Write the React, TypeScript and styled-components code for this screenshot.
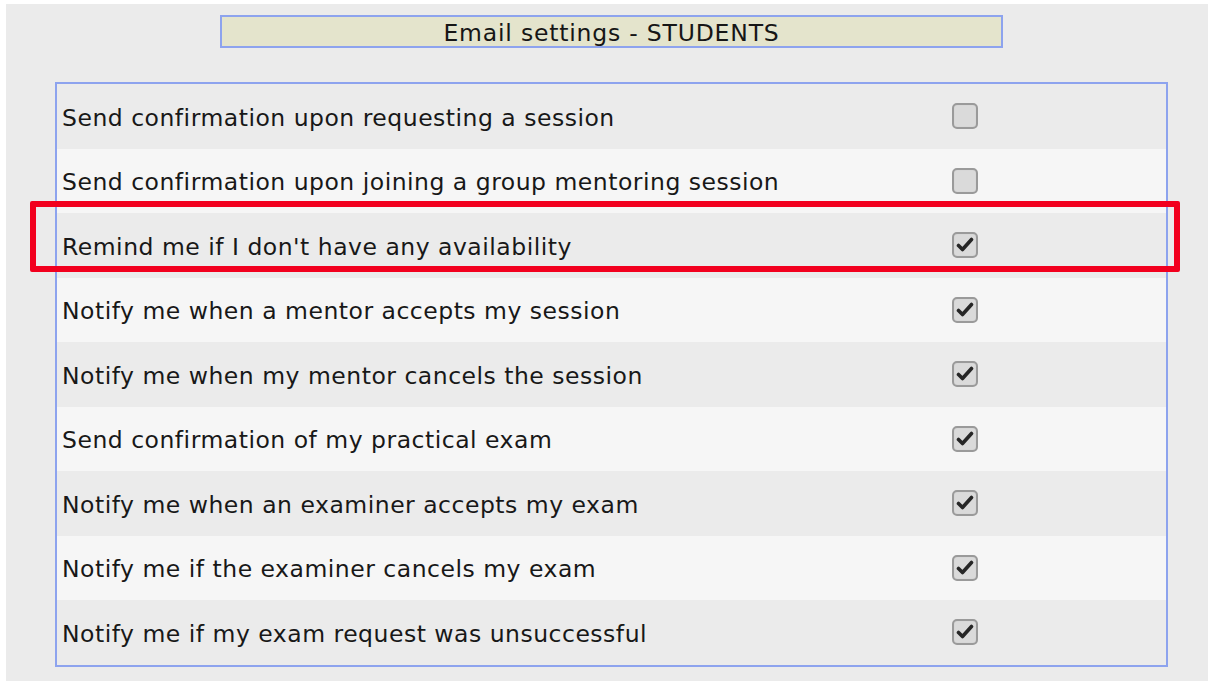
import * as React from "react";
import styled, { createGlobalStyle } from "styled-components";

const GlobalStyle = createGlobalStyle`
  html, body {
    margin: 0;
    padding: 0;
    background: #ffffff;
  }
  body {
    font-family: "DejaVu Sans", Verdana, sans-serif;
  }
`;

const Panel = styled.section`
  margin: 4px 14px 0 6px;
  height: 677px;
  box-sizing: border-box;
  background-color: #ebebeb;
  padding: 11px 0 0 49px;
`;

const Title = styled.div`
  width: 783px;
  height: 33px;
  box-sizing: border-box;
  margin-left: 165px;
  border: 2px solid #8da3ee;
  background-color: #e4e4cc;
  color: #161616;
  font-size: 23.5px;
  letter-spacing: 0.8px;
  line-height: 33px;
  text-align: center;
`;

const TableWrap = styled.div`
  position: relative;
  margin-top: 34px;
  width: 1113px;
`;

const Table = styled.div`
  border: 2px solid #8da3ee;
  display: flex;
  flex-direction: column;
`;

const Row = styled.div<{ $alt: boolean }>`
  display: grid;
  grid-template-columns: 880px 56px 1fr;
  align-items: center;
  height: 64.5px;
  background-color: ${(p) => (p.$alt ? "#f6f6f6" : "#ebebeb")};
`;

const Label = styled.span`
  padding: 3px 0 0 5px;
  font-size: 23.5px;
  letter-spacing: 0.5px;
  color: #181818;
  white-space: nowrap;
`;

const Box = styled.span`
  justify-self: center;
  width: 22px;
  height: 22px;
  border: 2px solid #9a9a9a;
  border-radius: 5px;
  background-color: #dadada;
  display: flex;
  align-items: center;
  justify-content: center;
  box-shadow: inset 0 0 1px rgba(0, 0, 0, 0.15);
`;

const Highlight = styled.div`
  position: absolute;
  left: -25px;
  top: 119px;
  width: 1150px;
  height: 71px;
  box-sizing: border-box;
  border: 6px solid #f2001e;
  border-radius: 2px;
  pointer-events: none;
`;

const Check = () => (
  <svg width="18" height="16" viewBox="0 0 18 16">
    <path
      d="M2.5 8.5 L6.5 12.5 L15.5 2.5"
      fill="none"
      stroke="#262626"
      strokeWidth="3.6"
      strokeLinecap="round"
      strokeLinejoin="round"
    />
  </svg>
);

const settings = [
  { label: "Send confirmation upon requesting a session", checked: false },
  { label: "Send confirmation upon joining a group mentoring session", checked: false },
  { label: "Remind me if I don't have any availability", checked: true },
  { label: "Notify me when a mentor accepts my session", checked: true },
  { label: "Notify me when my mentor cancels the session", checked: true },
  { label: "Send confirmation of my practical exam", checked: true },
  { label: "Notify me when an examiner accepts my exam", checked: true },
  { label: "Notify me if the examiner cancels my exam", checked: true },
  { label: "Notify me if my exam request was unsuccessful", checked: true },
];

const App = () => {
  return (
    <>
      <GlobalStyle />
      <Panel>
        <Title>Email settings - STUDENTS</Title>
        <TableWrap>
          <Table>
            {settings.map((s, i) => (
              <Row key={s.label} $alt={i % 2 === 1}>
                <Label>{s.label}</Label>
                <Box>{s.checked && <Check />}</Box>
              </Row>
            ))}
          </Table>
          <Highlight />
        </TableWrap>
      </Panel>
    </>
  );
};

export default App;
